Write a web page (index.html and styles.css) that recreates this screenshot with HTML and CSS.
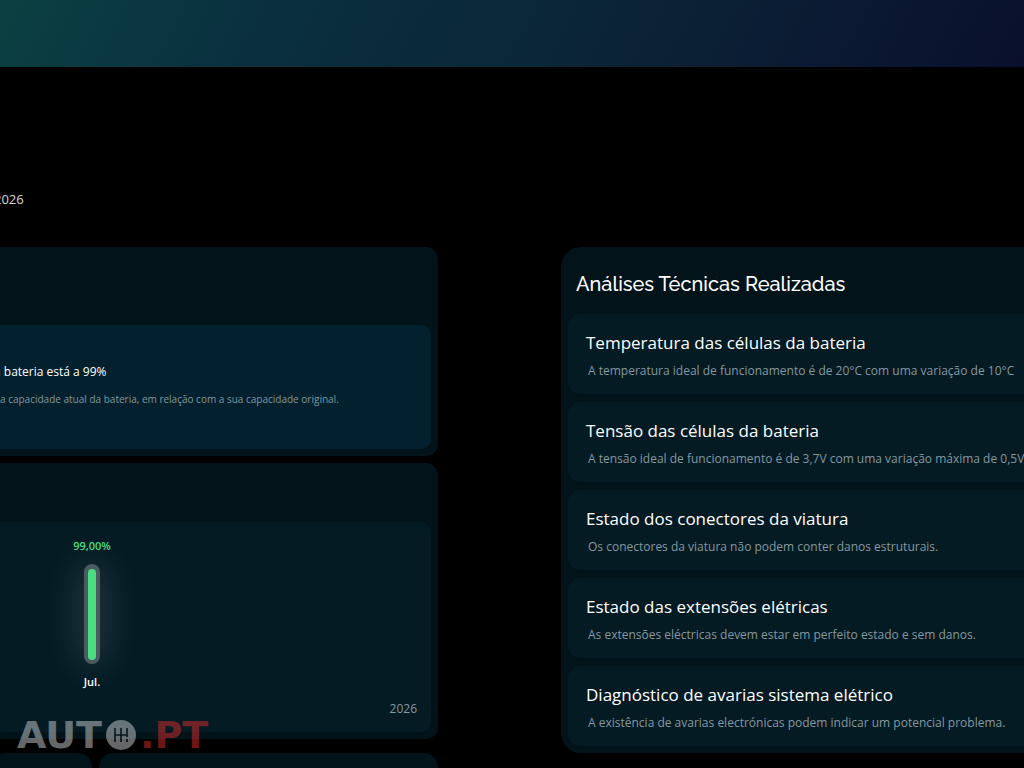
FILE: index.html
```html
<!DOCTYPE html>
<html lang="pt">
  <head>
    <meta charset="UTF-8" />
    <meta name="viewport" content="width=device-width, initial-scale=1.0" />
    <title>Auto.pt - Estado da bateria</title>
    <link rel="stylesheet" href="styles.css">
  </head>

  <body>
    <header class="banner"></header>

    <main class="report">
      <p class="report-date">2026</p>

      <div class="columns">
        <div class="column-left">
          <section class="card card-health">
            <div class="panel panel-health">
              <h3>a bateria está a 99%</h3>
              <p>a capacidade atual da bateria, em relação com a sua capacidade original.</p>
            </div>
          </section>

          <section class="card card-history">
            <div class="panel panel-chart">
              <div class="chart">
                <div class="bar">
                  <span class="bar-value">99,00%</span>
                  <div class="bar-track">
                    <div class="bar-fill" style="height: 99%"></div>
                  </div>
                  <span class="bar-label">Jul.</span>
                </div>
              </div>
              <p class="chart-year">2026</p>
            </div>
          </section>

          <div class="card-row">
            <section class="card"></section>
            <section class="card"></section>
          </div>
        </div>

        <section class="card analysis">
          <h2>Análises Técnicas Realizadas</h2>
          <article class="panel test">
            <h3>Temperatura das células da bateria</h3>
            <p>A temperatura ideal de funcionamento é de 20°C com uma variação de 10°C</p>
          </article>
          <article class="panel test">
            <h3>Tensão das células da bateria</h3>
            <p>A tensão ideal de funcionamento é de 3,7V com uma variação máxima de 0,5V.</p>
          </article>
          <article class="panel test">
            <h3>Estado dos conectores da viatura</h3>
            <p>Os conectores da viatura não podem conter danos estruturais.</p>
          </article>
          <article class="panel test">
            <h3>Estado das extensões elétricas</h3>
            <p>As extensões eléctricas devem estar em perfeito estado e sem danos.</p>
          </article>
          <article class="panel test">
            <h3>Diagnóstico de avarias sistema elétrico</h3>
            <p>A existência de avarias electrónicas podem indicar um potencial problema.</p>
          </article>
        </section>
      </div>
    </main>

    <div class="watermark">
      <span>AUT</span>
      <svg width="32" height="32" viewBox="0 0 32 32" aria-hidden="true">
        <circle cx="16" cy="16" r="15" fill="#c9cdcf" />
        <path d="M10 9v14M16 9v14M22 9v9M10 16h12M22 20v3" fill="none" stroke="#0a1a20" stroke-width="1.6" />
      </svg>
      <span class="watermark-pt">.PT</span>
    </div>
  </body>
</html>
```

FILE: styles.css
```css
* {
  box-sizing: border-box;
}

body {
  margin: 0;
  height: 100vh;
  overflow: hidden;
  background-color: #000;
  color: #fff;
  font-family: "Open Sans", sans-serif;
}

h2,
h3,
p {
  margin: 0;
  font-weight: normal;
  white-space: nowrap;
}

.banner {
  height: 67px;
  background: linear-gradient(118deg, #0b4042 0%, #0a3140 24%, #0b2136 65%, #0a102c 100%);
}

/* the report is wider than the window on both sides */
.report {
  margin: 0 -80px 0 -8px;
  padding-top: 122px;
}

.report-date {
  padding-left: 2px;
  font-size: 13px;
  line-height: 20px;
  color: #d8d8d8;
}

.columns {
  display: grid;
  grid-template-columns: 446fr 543fr;
  gap: 123px;
  align-items: start;
  margin-top: 38px;
}

.column-left {
  display: flex;
  flex-direction: column;
  gap: 7px;
}

.card {
  background-color: #02141a;
  border-radius: 14px;
}

.panel {
  background-color: #041b24;
  border-radius: 12px;
}

.column-left > .card {
  border-radius: 0 12px 12px 0;
  padding-right: 7px;
  padding-bottom: 7px;
}

.column-left .panel {
  border-radius: 0 10px 10px 0;
}

.card-health {
  padding-top: 78px;
}

.panel-health {
  height: 124px;
  padding-top: 37px;
  background-color: #02202d;
}

.panel-health h3 {
  padding-left: 2px;
  font-size: 12px;
  line-height: 20px;
}

.panel-health p {
  padding-left: 8px;
  margin-top: 8px;
  font-size: 10px;
  line-height: 18px;
  color: #84989f;
}

.card-history {
  padding-top: 59px;
}

.panel-chart {
  height: 210px;
  padding: 15px 14px 12px 0;
}

.chart {
  display: grid;
  grid-template-columns: 200px 1fr;
}

.bar {
  display: flex;
  flex-direction: column;
  align-items: center;
  font-size: 11px;
  line-height: 18px;
}

.bar-value {
  color: #4ade80;
  font-weight: 600;
}

.bar-track {
  display: flex;
  align-items: flex-end;
  width: 16px;
  height: 100px;
  margin: 9px 0;
  padding: 4px;
  border-radius: 8px;
  background-color: #4a5c62;
  box-shadow: 0 0 36px rgba(255, 255, 255, 0.25);
}

.bar-fill {
  width: 8px;
  border-radius: 4px;
  background-color: #4ade80;
}

.bar-label {
  font-weight: 600;
}

.chart-year {
  margin-top: 9px;
  font-size: 12px;
  line-height: 18px;
  text-align: right;
  color: #84989f;
}

.card-row {
  display: grid;
  grid-template-columns: 100px 1fr;
  gap: 7px;
  margin-top: 7px;
}

.card-row .card {
  height: 120px;
}

.analysis {
  padding: 22px 7px 7px;
  border-radius: 20px;
}

.analysis h2 {
  padding-left: 8px;
  margin-bottom: 15px;
  font-family: Raleway, "Open Sans", sans-serif;
  font-size: 20px;
  line-height: 30px;
  font-weight: 500;
}

.test {
  height: 80px;
  margin-bottom: 8px;
  padding: 15px 18px;
}

.test:last-child {
  margin-bottom: 0;
}

.test h3 {
  font-size: 17px;
  line-height: 28px;
}

.test p {
  padding-left: 2px;
  margin-top: 4px;
  font-size: 12px;
  line-height: 20px;
  color: #84989f;
}

/* site logo laid over the page */
.watermark {
  position: absolute;
  left: 17px;
  bottom: 16px;
  display: flex;
  align-items: center;
  gap: 3px;
  font-family: "DejaVu Sans", sans-serif;
  font-size: 38px;
  font-weight: bold;
  line-height: 34px;
  color: #c9cdcf;
  opacity: 0.5;
}

.watermark-pt {
  color: #d82c2c;
}
```
